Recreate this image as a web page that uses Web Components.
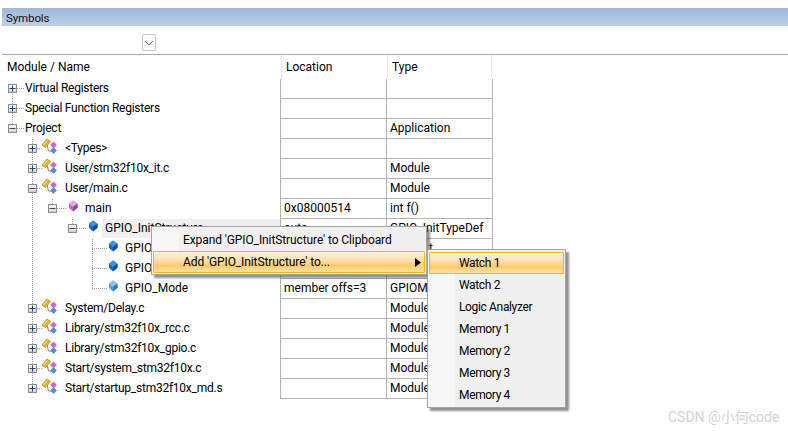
<!DOCTYPE html>
<html><head><meta charset="utf-8"><style>
html,body{margin:0;padding:0;background:#fff}
body{width:788px;height:431px;overflow:hidden;position:relative;font:12px Roboto,"Liberation Sans",sans-serif;color:#000}
</style></head><body>
<x-app>
  <x-title-bar>Symbols</x-title-bar>
  <x-tool-strip></x-tool-strip>
  <x-symbol-table>
    <x-row guides="12:b" box="plus" level="0" name="Virtual Registers"></x-row>
    <x-row guides="12:f" box="plus" level="0" name="Special Function Registers"></x-row>
    <x-row guides="12:t" box="minus" level="0" name="Project" type="Application"></x-row>
    <x-row guides="32:f" box="plus" level="1" icon="module" name="&lt;Types&gt;"></x-row>
    <x-row guides="32:f" box="plus" level="1" icon="module" name="User/stm32f10x_it.c" type="Module"></x-row>
    <x-row guides="32:f" box="minus" level="1" icon="module" name="User/main.c" type="Module"></x-row>
    <x-row guides="32:f 52:t" box="minus" level="2" icon="func" name="main" loc="0x08000514" type="int f()"></x-row>
    <x-row guides="32:f 72:t" box="minus" level="3" icon="var" hl name="GPIO_InitStructure" loc="auto" type="GPIO_InitTypeDef"></x-row>
    <x-row guides="32:f 92:f" level="4" icon="var" name="GPIO_Pin" loc="member offs=0" type="uint16_t"></x-row>
    <x-row guides="32:f 92:f" level="4" icon="var" name="GPIO_Speed" loc="member offs=2" type="GPIOSpeed_TypeDef"></x-row>
    <x-row guides="32:f 92:t" level="4" icon="varlight" name="GPIO_Mode" loc="member offs=3" type="GPIOMode_TypeDef"></x-row>
    <x-row guides="32:f" box="plus" level="1" icon="module" name="System/Delay.c" type="Module"></x-row>
    <x-row guides="32:f" box="plus" level="1" icon="module" name="Library/stm32f10x_rcc.c" type="Module"></x-row>
    <x-row guides="32:f" box="plus" level="1" icon="module" name="Library/stm32f10x_gpio.c" type="Module"></x-row>
    <x-row guides="32:f" box="plus" level="1" icon="module" name="Start/system_stm32f10x.c" type="Module"></x-row>
    <x-row guides="32:t" box="plus" level="1" icon="module" name="Start/startup_stm32f10x_md.s" type="Module"></x-row>
  </x-symbol-table>
  <x-menu style="left:151px;top:226px;width:276px;--ls:-.1px">
    <x-menu-item h="23">Expand 'GPIO_InitStructure' to Clipboard</x-menu-item>
    <x-menu-item h="22" active arrow>Add 'GPIO_InitStructure' to...</x-menu-item>
  </x-menu>
  <x-menu style="left:427px;top:249px;width:139px;--pt:2px;--ls:-.35px">
    <x-menu-item active>Watch 1</x-menu-item>
    <x-menu-item>Watch 2</x-menu-item>
    <x-menu-item>Logic Analyzer</x-menu-item>
    <x-menu-item>Memory 1</x-menu-item>
    <x-menu-item>Memory 2</x-menu-item>
    <x-menu-item>Memory 3</x-menu-item>
    <x-menu-item>Memory 4</x-menu-item>
  </x-menu>
  <x-watermark>CSDN @小何code</x-watermark>
</x-app>
<script>
function def(name,css,html){
  customElements.define(name,class extends HTMLElement{
    connectedCallback(){
      if(this.shadowRoot)return;
      const r=this.attachShadow({mode:'open'});
      r.innerHTML='<style>'+css+'</style>'+html;
    }
  });
}
def('x-app',':host{display:block;width:788px;height:431px;position:relative;padding:8px 0 0 2px;box-sizing:border-box}','<slot></slot>');
def('x-title-bar',':host{display:flex;align-items:center;height:18px;box-sizing:border-box;padding:1px 0 0 4px;background:linear-gradient(#9fb8d8,#bdd1e9);font-size:11.5px;letter-spacing:-.1px;color:#111}','<slot></slot>');
def('x-tool-strip',':host{display:flex;align-items:flex-start;height:29px;box-sizing:border-box;padding:8px 0 0 140px;border-bottom:1px solid #a8a8a8}button{all:unset;display:flex;align-items:center;justify-content:center;box-sizing:border-box;width:14px;height:17px;border:1px solid #c8c8c8;border-radius:2px;background:#fcfcfc}',
 '<button aria-label="dropdown"><svg width="10" height="6" viewBox="0 0 10 6"><path d="M1 1l4 4 4-4" fill="none" stroke="#707070" stroke-width="1"/></svg></button>');
def('x-symbol-table',
 ':host{display:block;width:491px}.head{display:grid;grid-template-columns:278px 106px 106px;height:24px;line-height:24px}.head div{padding-left:4px;border-left:1px solid #e8e8e8;box-sizing:border-box;margin-left:1px}.head div:first-child{border:0;margin:0;padding-left:5px}.head div:last-child{border-right:1px solid #e8e8e8}',
 '<div class="head"><div>Module / Name</div><div>Location</div><div>Type</div></div><slot></slot>');
function box(x,kind){
 const id='g'+kind;
 const sign=kind==='plus'?`<path d="M${x-2.5} 9.5h6M${x+.5} 6.5v6" stroke="#21437e" fill="none"/>`:`<path d="M${x-2.5} 9.5h6" stroke="#3a4a66" fill="none"/>`;
 return `<defs><linearGradient id="${id}" x1="0" y1="0" x2="0" y2="1"><stop offset="0" stop-color="#fdfdfd"/><stop offset=".55" stop-color="#ececec"/><stop offset="1" stop-color="#c8c8c8"/></linearGradient></defs><rect x="${x-3.5}" y="5.5" width="8" height="8" fill="url(#${id})" stroke="#8c8c8c"/>`+sign;
}
function diamond(x,c){
 return `<path d="M${x} 1.5L${x+4.5} 4.8v4L${x} 12.5 ${x-4} 9V4.8z" fill="${c[2]}"/><path d="M${x} 1.5L${x+4.5} 4.8 ${x} 8 ${x-4} 4.8z" fill="${c[0]}"/><path d="M${x} 8L${x+4.5} 4.8v4L${x} 12.5z" fill="${c[1]}"/>`;
}
function icon(kind,x){
 if(kind==='module'){
  return `<path d="M${x+5} 6l1.5 6h3" fill="none" stroke="#7c8a9c"/>`+
   `<path d="M${x} 6L${x+5} 0 ${x+8.5} 2.5 ${x+3.5} 8.5z" fill="#e6b52a" stroke="#a88410" stroke-width=".7"/><path d="M${x+1.5} 6L${x+5.5} 1.2" stroke="#fbe9a8" fill="none"/>`+
   `<path d="M${x+11.5} 3l3 3-3 3-3-3z" fill="#d75fd6" stroke="#a848b0" stroke-width=".5"/><path d="M${x+11.5} 8.5l3 3-3 3-3-3z" fill="#4a94dc" stroke="#2e70b0" stroke-width=".5"/>`;
 }
 if(kind==='func')return diamond(x+4,['#eaa4e6','#9a3fa0','#c46cc8']);
 if(kind==='varlight')return diamond(x+4,['#8cc0ee','#2f74c6','#5b9cdc']);
 return diamond(x+4,['#3f8fe2','#0f4aa8','#2566c4']);
}
customElements.define('x-row',class extends HTMLElement{
 connectedCallback(){
  if(this.shadowRoot)return;
  const g=n=>this.getAttribute(n)||'';
  const lv=+g('level'),ic=g('icon'),bk=g('box');
  const bx=lv===0?12:12+20*lv;
  const textX=ic?45+20*lv:25;
  const w=textX-2;
  let s='';
  g('guides').split(' ').forEach(p=>{const [x,m]=p.split(':');const y1=m==='b'?9:0,y2=m==='t'?9:20;
   s+=`<path d="M${+x+.5} ${y1}V${y2}" stroke="#a0a0a0" stroke-dasharray="1 1" fill="none"/>`;});
  if(lv===4){s+=`<path d="M92 9.5H107" stroke="#a0a0a0" stroke-dasharray="1 1" fill="none"/>`;}
  else{const end=ic?(lv<2?42:bx+15):24;s+=`<path d="M${bx+5} 9.5H${end}" stroke="#a0a0a0" stroke-dasharray="1 1" fill="none"/>`;}
  if(bk)s+=box(bx,bk);
  if(ic){const ix=lv===1?42:lv===4?109:bx+17;s+=icon(ic,ix);}
  const hl=this.hasAttribute('hl');
  const r=this.attachShadow({mode:'open'});
  r.innerHTML=`<style>
  :host{display:grid;grid-template-columns:278px 106px 106px 1px;height:20px;line-height:19px}
  .n{display:flex;height:20px}
  svg{flex:none;overflow:visible;display:block}
  .t{flex:1;white-space:nowrap;height:19px;letter-spacing:${lv<2?'-.25px':'0'}}
  .t.hl{background:#efefef;margin-left:-3px;padding-left:3px}
  .c{border-left:1px solid #b2b2b2;border-bottom:1px solid #b2b2b2;padding-left:3px;white-space:nowrap;overflow:hidden}
  .e{background:#b2b2b2}
  </style><div class="n"><svg width="${w}" height="20" viewBox="2 0 ${w} 20">${s}</svg><div class="t${hl?' hl':''}"></div></div><div class="c loc"></div><div class="c ty"></div><div class="e"></div>`;
  r.querySelector('.t').textContent=g('name');
  r.querySelector('.loc').textContent=g('loc');
  r.querySelector('.ty').textContent=g('type');
 }
});
def('x-menu',':host{display:flex;flex-direction:column;position:absolute;box-sizing:border-box;padding:var(--pt,1px) 1px 1px;border:1px solid #a4a4a4;background:linear-gradient(90deg,#f7f7f7 27px,#f0f0f0 27px);box-shadow:3px 3px 2px rgba(70,70,70,.6);letter-spacing:var(--ls,0)}','<slot></slot>');
customElements.define('x-menu-item',class extends HTMLElement{
 connectedCallback(){
  if(this.shadowRoot)return;
  const a=this.hasAttribute('active'),h=this.getAttribute('h')||22;
  const r=this.attachShadow({mode:'open'});
  r.innerHTML=`<style>:host{display:flex;align-items:center;height:${h}px;box-sizing:border-box;padding-left:30px;white-space:nowrap;${a?'border:1px solid #ffb400;border-radius:1px;background:linear-gradient(#fdf0dd,#fde2b8 35%,#ffcb6b 70%,#ffe3a8);padding-left:29px;':''}}
  .s{flex:1}svg{display:block;margin-right:3px}</style><span class="s"><slot></slot></span>${this.hasAttribute('arrow')?'<svg width="6" height="9" viewBox="0 0 6 9"><path d="M0 0l6 4.5-6 4.5z" fill="#000"/></svg>':''}`;
 }
});
def('x-watermark',':host{position:absolute;left:668px;top:407px;font:14px Roboto,"Noto Sans CJK SC",sans-serif;line-height:20px;color:#d2d2d2;white-space:nowrap}','<slot></slot>');
</script>
</body></html>
